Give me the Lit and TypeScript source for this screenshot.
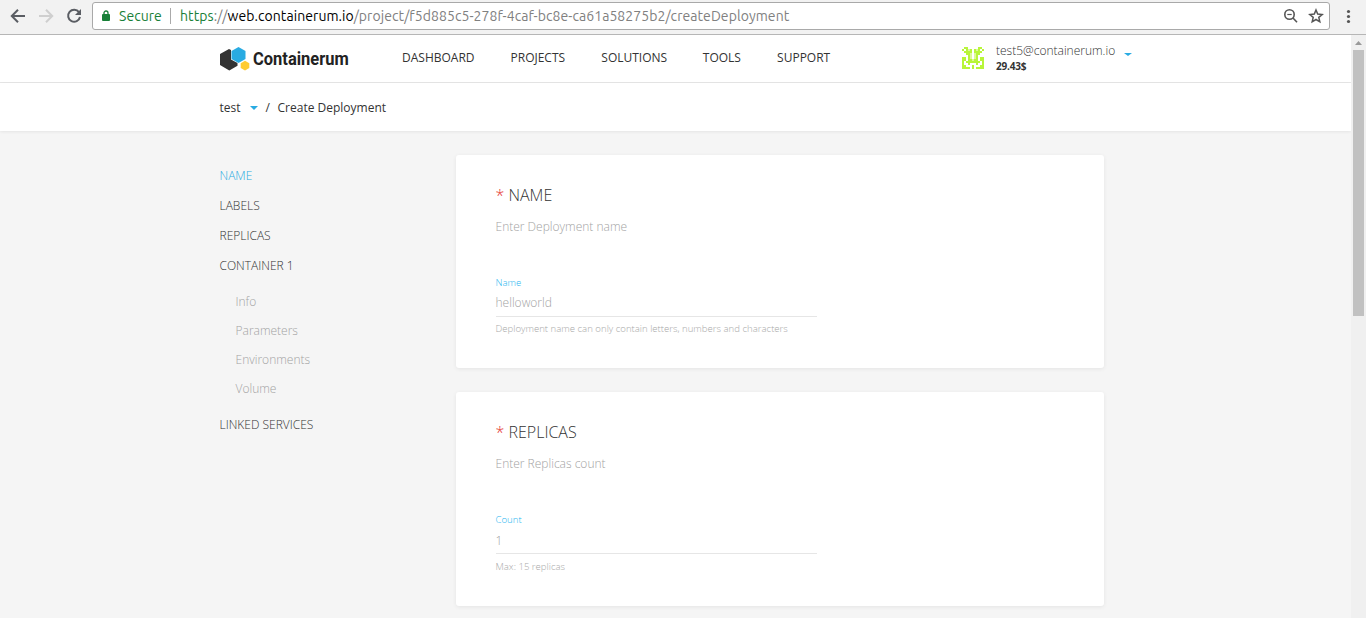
import { LitElement, html, css, svg } from "lit";
import { customElement } from "lit/decorators.js";

const AVATAR = [
  "01100000110",
  "10121012101",
  "01111011110",
  "00112021100",
  "00012021000",
  "11012021011",
  "11011211011",
  "10111111101",
  "10010001001",
  "11000100011",
  "11110101111",
];
const SHADES: Record<string, string> = { "1": "#b8f53a", "2": "#dcf89a" };

@customElement("app-root")
export class AppRoot extends LitElement {
  static styles = css`
    :host { display: flex; flex-direction: column; height: 618px; overflow: hidden; background: #f5f5f5; color: #333; font-family: "Open Sans", sans-serif; }
    * { box-sizing: border-box; }
    svg { display: block; flex: none; }
    .toolbar { height: 35px; flex: none; display: flex; align-items: flex-start; background: #f2f2f2; border-bottom: 1px solid #b6b6b6; }
    .tools { width: 92px; height: 33px; flex: none; }
    .address { margin-top: 2px; width: 1238px; height: 28px; border: 1px solid #a9a9a9; border-radius: 3px; background: #fff; display: flex; align-items: center; font: 14px/20px Ubuntu, "Noto Sans", sans-serif; white-space: pre; }
    .lock { margin-left: 8px; }
    .secure { color: #188038; margin-left: 8px; width: 43px; letter-spacing: .04px; }
    .bar { width: 1px; height: 16px; background: #aaa; margin: 0 9px 0 8px; }
    .url { color: #808080; letter-spacing: .07px; }
    .https { color: #188038; }
    .domain { color: #000; }
    .actions { margin-left: auto; margin-right: 5px; display: flex; gap: 9px; }
    .viewport { display: flex; flex: 1; min-height: 0; }
    .page { flex: 1; min-width: 0; }
    .header { height: 48px; padding-left: 219px; background: #fff; border-bottom: 1px solid #e6e6e6; display: flex; }
    .logo { display: flex; width: 183px; padding-top: 11px; }
    .brand { font: 700 18px/26px Roboto, sans-serif; color: #222; margin: 0 0 0 3px; transform-origin: left; transform: scaleX(.915); }
    .nav { display: flex; font-size: 12px; line-height: 18px; padding-top: 14px; width: 560px; }
    .nav span { flex: none; }
    .n1 { width: 108.5px; } .n2 { width: 90.8px; } .n3 { width: 101.5px; } .n4 { width: 74.3px; }
    .avatar { margin-top: 12px; }
    .user { padding: 7px 0 0 12px; width: 133px; flex: none; font-size: 12px; line-height: 18px; font-weight: 300; }
    .balance { font-size: 10px; line-height: 13px; font-weight: 700; letter-spacing: -.2px; }
    .caret { width: 0; height: 0; border: 3.5px solid transparent; border-top: 4px solid #29abe2; border-bottom: 0; }
    .usercaret { margin: 18px 0 0 7px; border-width: 3px 4px 0; }
    .crumbs { height: 48px; background: #fff; box-shadow: 0 1px 3px rgba(0,0,0,.07); padding: 2px 0 0 219.5px; display: flex; align-items: center; font-size: 12px; line-height: 18px; white-space: pre; }
    .crumbs .caret { margin: 0 8px 0 9px; border-width: 4px 4px 0; }
    .slash { width: 12px; }
    .content { display: flex; padding: 24px 0 0 219.5px; }
    .side { width: 236.5px; padding-top: 6px; font-size: 12px; font-weight: 300; display: flex; flex-direction: column; }
    .item { height: 30px; line-height: 30px; }
    .active { color: #29abe2; }
    .subs { padding: 6px 0 7px 16px; color: #a3a3a3; }
    .sub { height: 29px; line-height: 29px; }
    .cards { display: flex; flex-direction: column; gap: 24px; width: 648px; }
    .card { height: 213px; background: #fff; border-radius: 3px; box-shadow: 0 1px 4px rgba(0,0,0,.07); padding: 28px 39.5px 0; font-weight: 300; }
    .card + .card { height: 214px; }
    .title { font-size: 16px; line-height: 24px; }
    .star { color: #e53935; }
    .desc { font-size: 12px; line-height: 18px; color: #a3a3a3; margin-top: 11px; }
    .label { font-size: 9.6px; line-height: 14px; color: #29b6f0; margin-top: 40px; }
    .value { width: 321px; height: 27px; border-bottom: 1px solid #e6e6e6; font-size: 12px; line-height: 26px; color: #a3a3a3; }
    .hint { font-size: 9.6px; line-height: 14px; color: #a8a8a8; margin-top: 5px; }
    .card + .card .value { line-height: 28px; }
    .card + .card .hint { margin-top: 6px; }
    .scroll { width: 15px; background: #f0f0f0; padding: 6px 2px; display: flex; flex-direction: column; gap: 5px; }
    .thumb { width: 11px; height: 266px; background: #c1c1c1; }
  `;

  card(title: string, desc: string, label: string, value: string, hint: string) {
    return html`<section class="card">
      <div class="title"><span class="star">*</span> ${title}</div>
      <div class="desc">${desc}</div>
      <div class="label">${label}</div>
      <div class="value">${value}</div>
      <div class="hint">${hint}</div>
    </section>`;
  }

  render() {
    return html`
      <div class="toolbar">
        <svg class="tools" viewBox="0 0 92 33" fill="none" stroke="#5a5d63" stroke-width="2"><path d="M25 16H12M18 9.8L11.8 16l6.2 6.2"/><path stroke="#cfcfcf" d="M39 16h13M46 9.8l6.200 6.200-6.200 6.200"/><path d="M79 12.200A6 6 0 1 0 80 17"/><path fill="#5a5d63" stroke="none" d="M81 9v6h-6z"/></svg>
        <div class="address">
          <svg class="lock" width="10" height="12" viewBox="0 0 10 12"><rect x="1" y="4" width="8" height="7" rx="1" fill="#188038"/><path d="M3 5V3a2 2 0 0 1 4 0v2" fill="none" stroke="#188038" stroke-width="1.3"/></svg>
          <span class="secure">Secure</span><span class="bar"></span>
          <span class="url"><span class="https">https</span>://<span class="domain">web.containerum.io</span>/project/f5d885c5-278f-4caf-bc8e-ca61a58275b2/createDeployment</span>
          <span class="actions">
            <svg width="16" height="16" viewBox="0 0 16 16" fill="none" stroke="#555" stroke-width="1.6"><circle cx="6.500" cy="6.500" r="4.700"/><path d="M10 10l4 4.200"/><path stroke-width="1.200" d="M4.300 6.500h4.400"/></svg>
            <svg width="16" height="16" viewBox="0 0 16 16" fill="none" stroke="#555" stroke-width="1.5"><path d="M8 2l1.700 4.100 4.500.4-3.400 2.900 1 4.400L8 11.500l-3.800 2.300 1-4.400-3.400-2.900 4.500-.4z"/></svg>
          </span>
        </div>
        <svg width="36" height="33" viewBox="0 0 36 33" fill="#555"><circle cx="18.500" cy="11.500" r="1.600"/><circle cx="18.500" cy="16.500" r="1.600"/><circle cx="18.500" cy="21.500" r="1.600"/></svg>
      </div>
      <div class="viewport">
        <div class="page">
          <header class="header">
            <div class="logo"><svg width="31" height="26" viewBox="0 0 31 26"><path fill="#333" d="M10 3L1 8v11l9.300 5.500 8.200-4.800v-2.700l-6.500-3.500V4z"/><path fill="#29abe2" d="M19.500 1l7 4v8l-7 4-7-4V5z"/><path fill="#fc3" d="M26 14.800l4.300 2.500v4.800L26 24.500l-4.300-2.400v-4.800z"/></svg><span class="brand">Containerum</span></div>
            <nav class="nav"><span class="n1">DASHBOARD</span><span class="n2">PROJECTS</span><span class="n3">SOLUTIONS</span><span class="n4">TOOLS</span><span>SUPPORT</span></nav>
            <svg class="avatar" width="22" height="22" viewBox="0 0 11 11" shape-rendering="crispEdges">${AVATAR.map((r, y) => [...r].map((c, x) => c !== "0" ? svg`<rect x=${x} y=${y} width="1" height="1" fill=${SHADES[c]}/>` : ""))}</svg>
            <div class="user"><div>test5@containerum.io</div><div class="balance">29.43$</div></div>
            <div class="caret usercaret"></div>
          </header>
          <div class="crumbs"><span>test</span><span class="caret"></span><span class="slash">/</span><span>Create Deployment</span></div>
          <main class="content">
            <nav class="side">
              <div class="item active">NAME</div><div class="item">LABELS</div><div class="item">REPLICAS</div><div class="item">CONTAINER 1</div>
              <div class="subs"><div class="sub">Info</div><div class="sub">Parameters</div><div class="sub">Environments</div><div class="sub">Volume</div></div>
              <div class="item">LINKED SERVICES</div>
            </nav>
            <div class="cards">
              ${this.card("NAME", "Enter Deployment name", "Name", "helloworld", "Deployment name can only contain letters, numbers and characters")}
              ${this.card("REPLICAS", "Enter Replicas count", "Count", "1", "Max: 15 replicas")}
            </div>
          </main>
        </div>
        <div class="scroll"><svg width="11" height="4" viewBox="0 0 11 4"><path fill="#999" d="M2 4l3.500-4L9 4z"/></svg><div class="thumb"></div></div>
      </div>`;
  }
}
